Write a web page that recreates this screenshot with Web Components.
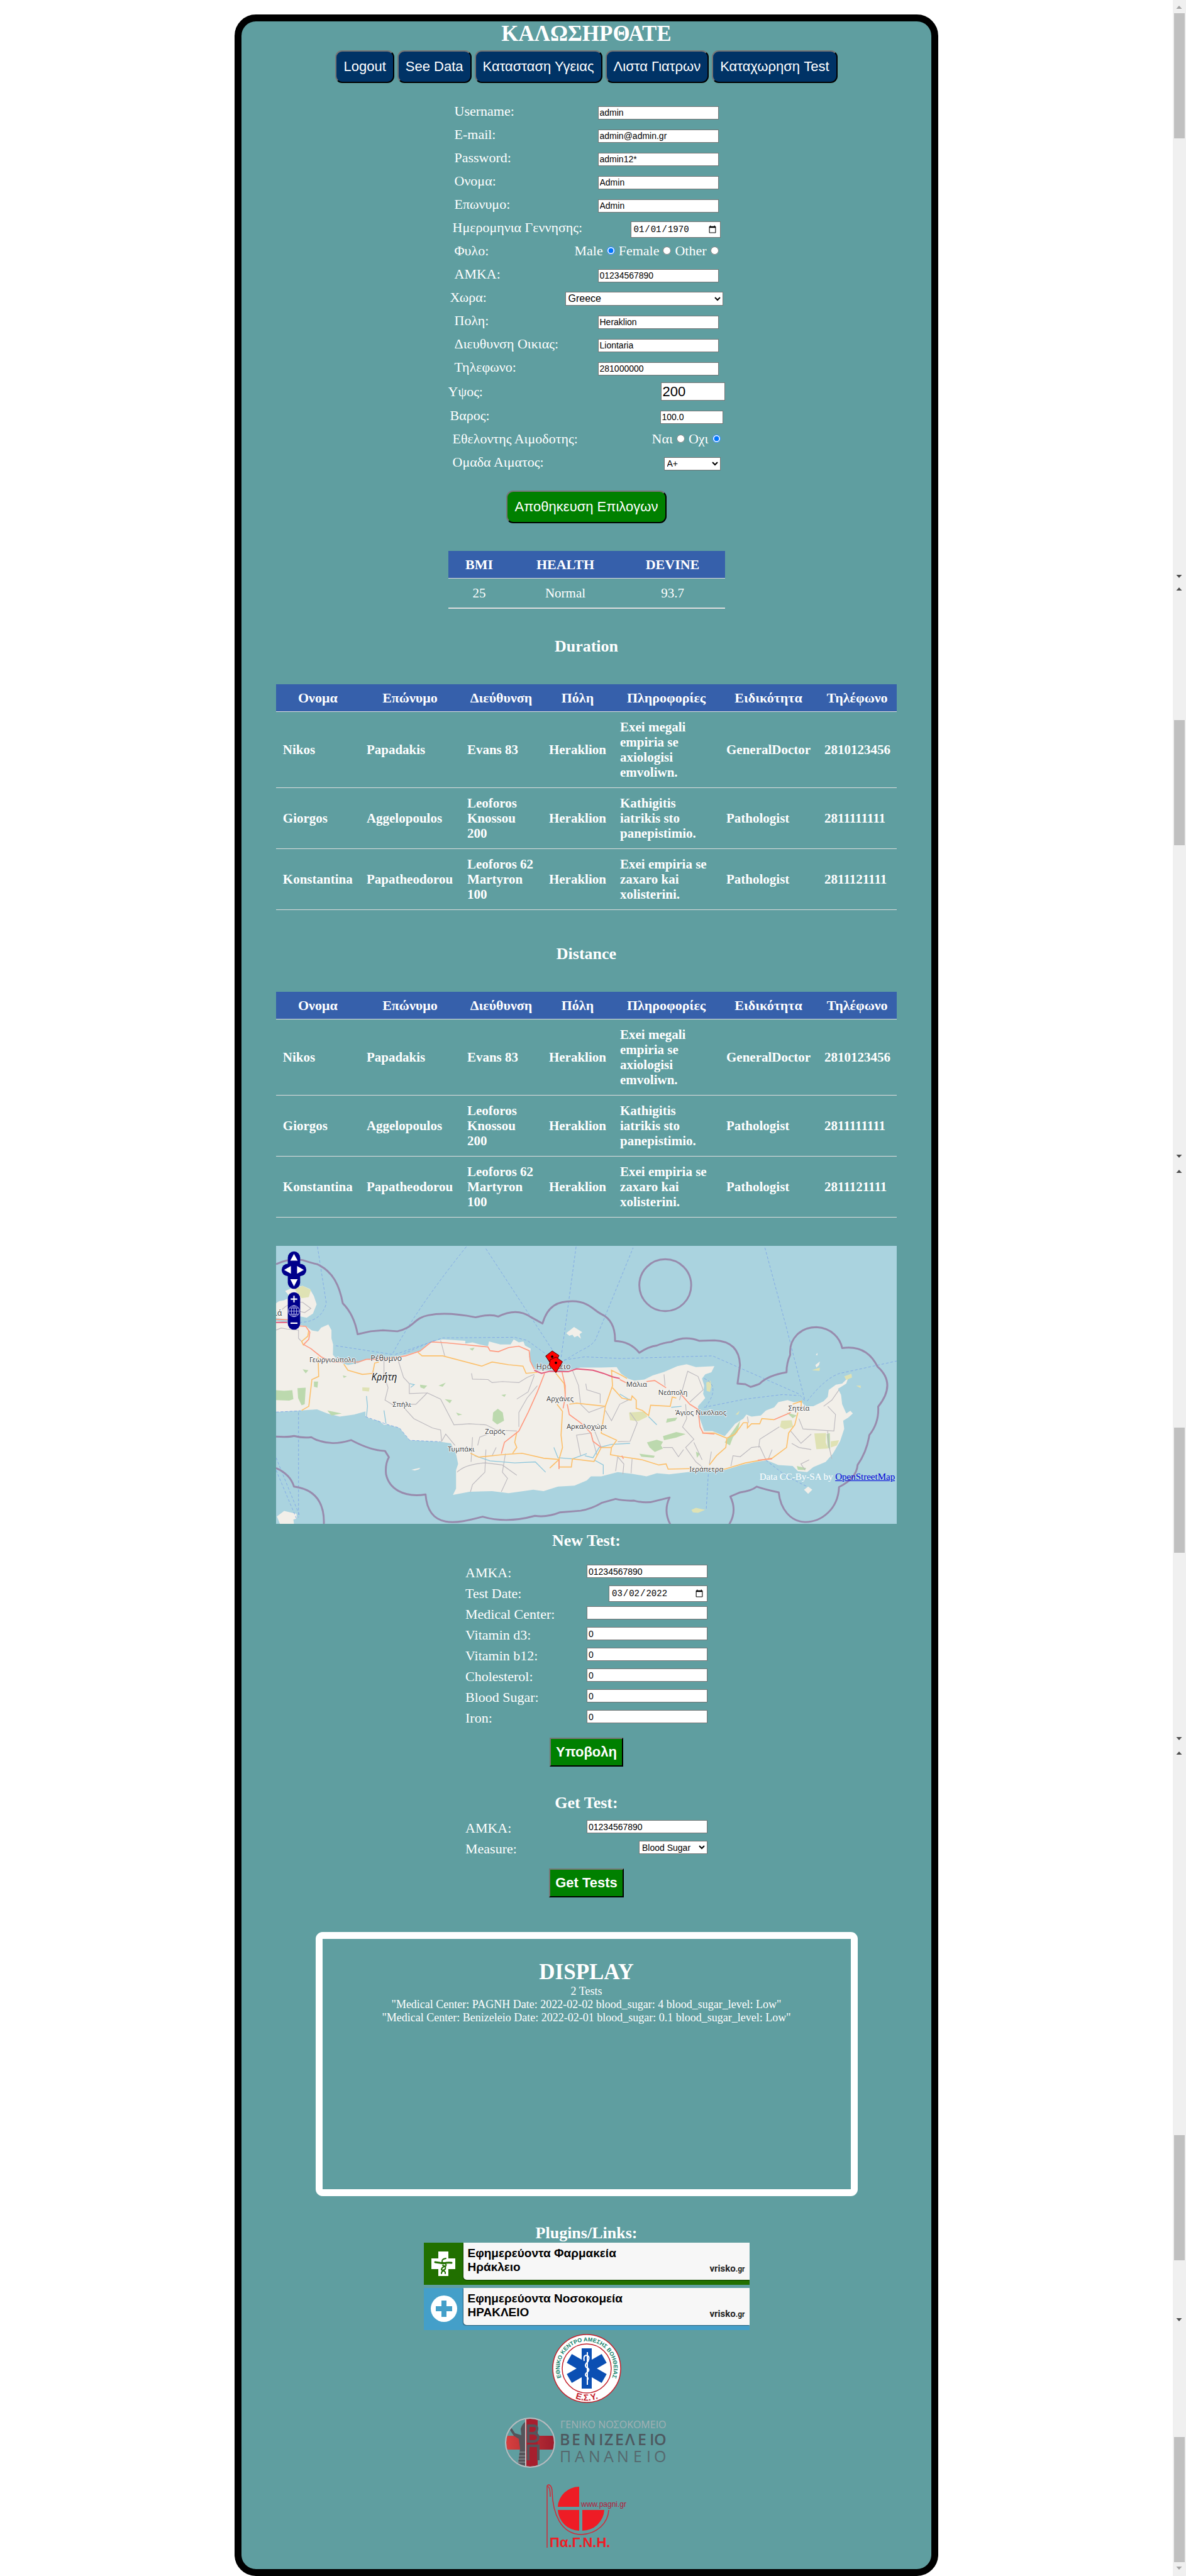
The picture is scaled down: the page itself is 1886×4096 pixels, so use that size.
<!DOCTYPE html>
<html lang="el">
<head>
<meta charset="utf-8">
<title>ΚΑΛΩΣΗΡΘΑΤΕ</title>
<style>
  body { margin: 0; background: #fff; color: #fff; font: 18px/21px "Liberation Serif", serif; }
</style>
</head>
<body>
<app-shell>
  <section-title level="1">ΚΑΛΩΣΗΡΘΑΤΕ</section-title>
  <nav-bar></nav-bar>

  <field-group kind="profile">
    <form-field label="Username:" type="text" value="admin" inset="wide"></form-field>
    <form-field label="E-mail:" type="text" value="admin@admin.gr" inset="wide"></form-field>
    <form-field label="Password:" type="text" value="admin12*" inset="wide"></form-field>
    <form-field label="Ονομα:" type="text" value="Admin" inset="wide"></form-field>
    <form-field label="Επωνυμο:" type="text" value="Admin" inset="wide"></form-field>
    <form-field label="Ημερομηνια Γεννησης:" type="date" value="1970-01-01" inset="mid" size="143"></form-field>
    <choice-field label="Φυλο:" options="Male|Female|Other" chosen="0" inset="wide"></choice-field>
    <form-field label="ΑΜΚΑ:" type="text" value="01234567890" inset="wide"></form-field>
    <form-field label="Χωρα:" type="select" value="Greece" inset="thin" size="251" text="large"></form-field>
    <form-field label="Πολη:" type="text" value="Heraklion" inset="wide"></form-field>
    <form-field label="Διευθυνση Οικιας:" type="text" value="Liontaria" inset="wide"></form-field>
    <form-field label="Τηλεφωνο:" type="text" value="281000000" inset="wide"></form-field>
    <form-field label="Υψος:" type="number" value="200" size="102" text="huge"></form-field>
    <form-field label="Βαρος:" type="number" value="100.0" inset="thin" size="100"></form-field>
    <choice-field label="Εθελοντης Αιμοδοτης:" options="Ναι|Οχι" chosen="1" inset="mid"></choice-field>
    <form-field label="Ομαδα Αιματος:" type="select" value="A+" inset="mid" size="90"></form-field>
  </field-group>
  <action-button kind="save">Αποθηκευση Επιλογων</action-button>

  <health-table></health-table>

  <section-title level="2" space="table">Duration</section-title>
  <doctor-table></doctor-table>
  <section-title level="2" space="far">Distance</section-title>
  <doctor-table></doctor-table>

  <crete-map></crete-map>

  <section-title level="2" space="form">New Test:</section-title>
  <field-group kind="test">
    <form-field label="AMKA:" type="text" value="01234567890"></form-field>
    <form-field label="Test Date:" type="date" value="2022-03-02" size="157"></form-field>
    <form-field label="Medical Center:" type="text" value=""></form-field>
    <form-field label="Vitamin d3:" type="number" value="0"></form-field>
    <form-field label="Vitamin b12:" type="number" value="0"></form-field>
    <form-field label="Cholesterol:" type="number" value="0"></form-field>
    <form-field label="Blood Sugar:" type="number" value="0"></form-field>
    <form-field label="Iron:" type="number" value="0"></form-field>
  </field-group>
  <action-button kind="submit">Υποβολη</action-button>

  <section-title level="2" space="get">Get Test:</section-title>
  <field-group kind="test">
    <form-field label="AMKA:" type="text" value="01234567890"></form-field>
    <form-field label="Measure:" type="select" value="Blood Sugar" size="109"></form-field>
  </field-group>
  <action-button kind="submit">Get Tests</action-button>

  <result-display>
    <div>2 Tests</div>
    <div>"Medical Center: PAGNH Date: 2022-02-02 blood_sugar: 4 blood_sugar_level: Low"</div>
    <div>"Medical Center: Benizeleio Date: 2022-02-01 blood_sugar: 0.1 blood_sugar_level: Low"</div>
  </result-display>

  <section-title level="2" space="links">Plugins/Links:</section-title>
  <plugin-links></plugin-links>
</app-shell>

<script>
const SERIF = '"Liberation Serif", serif';
const SANS = '"Liberation Sans", sans-serif';

function define(name, render) {
  customElements.define(name, class extends HTMLElement {
    connectedCallback() {
      if (this.shadowRoot) return;
      this.attachShadow({ mode: 'open' }).innerHTML = render(this);
    }
  });
}
const attr = (el, name, fallback = '') => el.getAttribute(name) ?? fallback;

define('app-shell', () => `
  <style>
    :host { display: flex; align-items: stretch; min-height: 100vh; }
    main { flex: 1; display: flex; justify-content: center; padding-top: 23px; }
    .card { width: 60%; box-sizing: border-box; border: 11px solid #000; border-radius: 34px;
      background: #5f9ea0; display: flex; flex-direction: column; align-items: center; padding-bottom: 24px; }
  </style>
  <main><div class="card"><slot></slot></div></main>
  <page-scrollbar></page-scrollbar>`);

define('page-scrollbar', () => {
  const thumbs = [21, 1145, 2270, 3395, 3875].map(y => `<rect x="2" y="${y}" width="17" height="199"/>`).join('');
  const up = y => `<path d="M5.500 ${y + 5}h9l-4.500-5z"/>`;
  const down = y => `<path d="M5.500 ${y}h9l-4.500 5z"/>`;
  return `
  <style>
    :host { display: block; position: relative; flex: none; width: 21px; background: #f0f0f0; }
    svg { position: absolute; inset: 0; width: 100%; height: 100%; }
  </style>
  <svg viewBox="0 0 21 4096" preserveAspectRatio="none" aria-hidden="true">
    <g fill="#c0c0c0">${thumbs}</g>
    <g fill="#a3a3a3">${up(9)}${down(4081)}</g>
    <g fill="#505050">${down(914)}${up(934)}${down(1836)}${up(1860)}${down(2762)}${up(2785)}${down(3686)}</g>
  </svg>`;
});

define('section-title', el => {
  const level = attr(el, 'level');
  return `
  <style>
    :host { display: block; text-align: center; }
    :host([space="table"]) { margin: 45px 0; }
    :host([space="far"]) { margin: 55px 0 45px; }
    :host([space="form"]) { margin: 12px 0 23px; }
    :host([space="get"]) { margin: 43px 0 12px; }
    :host([space="links"]) { margin: 44px 0 0; }
    h1, h2 { margin: 0; font-weight: bold; }
    h1 { font-size: 35px; line-height: 40px; }
    h2 { font-size: 26px; line-height: 30px; }
  </style>
  <h${level}><slot></slot></h${level}>`;
});

define('nav-bar', () => `
  <style>
    :host { display: block; margin-top: 6px; }
    nav { display: flex; gap: 5px; }
    button { height: 52px; padding: 0 11px 1px; border: 2px outset #767676; border-color: #767676 #212121 #212121 #767676;
      border-radius: 11px; background: #003366; color: #fff; font: 22px ${SANS}; white-space: nowrap; }
  </style>
  <nav>
    <button type="button">Logout</button><button type="button">See Data</button>
    <button type="button">Κατασταση Υγειας</button><button type="button">Λιστα Γιατρων</button>
    <button type="button">Καταχωρηση Test</button>
  </nav>`);

define('field-group', () => `
  <style>
    :host { display: flex; flex-direction: column; }
    :host([kind="profile"]) { width: 440px; margin: 32px 0 21px; gap: 12px; }
    :host([kind="test"]) { width: 385px; gap: 8px; margin-bottom: 19px; --row-align: flex-start; }
  </style>
  <slot></slot>`);

const FIELD_STYLE = `
  :host { display: flex; justify-content: space-between; align-items: var(--row-align, baseline);
    height: 25px; font-size: 22px; line-height: 25px; }
  :host([inset="wide"]) { padding: 0 10px; }
  :host([inset="mid"]) { padding: 0 7px; }
  :host([inset="thin"]) { padding: 0 3px; }
  label { white-space: nowrap; }`;

define('form-field', el => {
  const type = attr(el, 'type');
  const value = attr(el, 'value');
  const control = type === 'select'
    ? `<select id="field"><option>${value}</option></select>`
    : `<input id="field" type="${type}" value="${value}"${type === 'number' ? ' step="any"' : ''}>`;
  return `
  <style>
    ${FIELD_STYLE}
    :host([text="huge"]) { height: 28px; }
    input, select { width: ${attr(el, 'size', '192')}px; height: 21px; box-sizing: border-box; margin: 0; padding: 0 2px;
      border: 1px solid #767676; border-radius: 0; background: #fff; color: #000; font: 14px ${SANS}; }
    input[type="date"] { height: 26px; padding: 0 3px; font: 14px "Liberation Mono", monospace; }
    select { padding: 0; }
    :host([text="large"]) select { height: 22px; font-size: 16px; }
    :host([text="huge"]) input { height: 29px; font-size: 22px; }
  </style>
  <label for="field">${attr(el, 'label')}</label>${control}`;
});

define('choice-field', el => {
  const chosen = Number(attr(el, 'chosen'));
  const radios = attr(el, 'options').split('|').map((text, i) =>
    `<label>${text}<input type="radio" name="choice"${i === chosen ? ' checked' : ''}></label>`).join('');
  return `
  <style>
    ${FIELD_STYLE}
    .options { display: flex; gap: 6px; }
    .options label { display: flex; align-items: center; gap: 6px; }
    input { width: 13px; height: 13px; margin: 0; }
  </style>
  <span id="name">${attr(el, 'label')}</span>
  <div class="options" role="radiogroup" aria-labelledby="name">${radios}</div>`;
});

define('action-button', () => `
  <style>
    :host { display: block; }
    button { border: 2px outset #767676; border-color: #767676 #212121 #212121 #767676; background: #008000; color: #fff;
      font: 22px ${SANS}; white-space: nowrap; }
    :host([kind="save"]) { margin: 12px 0 44px; }
    :host([kind="save"]) button { height: 52px; padding: 0 12px; border-radius: 11px; }
    :host([kind="submit"]) button { height: 46px; padding: 0 8px; font-weight: bold; }
  </style>
  <button type="button"><slot></slot></button>`);

const TABLE_STYLE = `
  :host { display: block; }
  table { width: 100%; border-collapse: collapse; table-layout: fixed; }
  th, td { border-bottom: 1px solid #dddddd; color: #fff; }
  thead th { background: #3660ab; font-size: 22px; line-height: 25px; padding: 9px 0; }`;

define('health-table', () => `
  <style>
    ${TABLE_STYLE}
    :host { width: 440px; }
    td { text-align: center; font-size: 21px; line-height: 24px; padding: 11px 0; }
    tbody td { border-bottom-width: 2px; }
  </style>
  <table>
    <colgroup><col width="99"><col width="175"><col width="166"></colgroup>
    <thead><tr><th>BMI</th><th>HEALTH</th><th>DEVINE</th></tr></thead>
    <tbody><tr><td>25</td><td>Normal</td><td>93.7</td></tr></tbody>
  </table>`);

const DOCTORS = [
  ['Nikos', 'Papadakis', 'Evans 83', 'Heraklion', 'Exei megali empiria se axiologisi emvoliwn.', 'GeneralDoctor', '2810123456'],
  ['Giorgos', 'Aggelopoulos', 'Leoforos Knossou 200', 'Heraklion', 'Kathigitis iatrikis sto panepistimio.', 'Pathologist', '2811111111'],
  ['Konstantina', 'Papatheodorou', 'Leoforos 62 Martyron 100', 'Heraklion', 'Exei empiria se zaxaro kai xolisterini.', 'Pathologist', '2811121111'],
];
define('doctor-table', () => `
  <style>
    ${TABLE_STYLE}
    :host { width: 90%; }
    tbody td { font-weight: bold; font-size: 21px; line-height: 24px; padding: 12px 8px 12px 11px; vertical-align: middle; }
  </style>
  <table>
    <colgroup>${[133, 160, 130, 113, 169, 156, 126].map(w => `<col width="${w}">`).join('')}</colgroup>
    <thead><tr>${['Ονομα', 'Επώνυμο', 'Διεύθυνση', 'Πόλη', 'Πληροφορίες', 'Ειδικότητα', 'Τηλέφωνο'].map(t => `<th>${t}</th>`).join('')}</tr></thead>
    <tbody>${DOCTORS.map(r => `<tr>${r.map(c => `<td>${c}</td>`).join('')}</tr>`).join('')}</tbody>
  </table>`);

define('crete-map', () => `
  <style>
    :host { display: block; position: relative; width: 90%; margin-top: 45px; }
    svg { display: block; width: 100%; height: auto; }
    .credit { position: absolute; right: 3px; bottom: 66px; font-size: 15px; line-height: 18px; }
    .credit a { color: #0000d8; }
    .names text { font-family: "Noto Sans", sans-serif; font-size: 34px; fill: #444; stroke: #fff; stroke-width: 5px;
      paint-order: stroke; stroke-linejoin: round; text-anchor: middle; }
    .names .town { font-size: 38px; }
    .names .region { font-size: 47px; font-style: italic; fill: #222; }
  </style>
  <svg viewBox="21 21 3015 1350" role="img" aria-label="Κρήτη">
    <rect x="21" y="21" width="3015" height="1350" fill="#aad3df"/>
    <g fill="#f2efe9">
      <path d="M21 372V300L35 290 60 285 90 270 65 240 100 225 150 215 185 230 205 265 218 305 200 350 170 370 120 360 80 378z"/>
      <path d="M21 385L75 395 135 405 165 410 195 432 225 437 240 418 275 403 290 430 290 470 298 500 297 550 330 585 370 600 420 590 460 570 540 575 600 558 650 550 720 530 770 487 830 475 880 478 940 482 940 495 975 490 1010 500 1050 508 1055 485 1110 500 1160 500 1175 475 1200 490 1222 485 1230 505 1258 520 1250 560 1265 600 1285 625 1330 625 1390 630 1440 625 1500 612 1600 612 1675 610 1695 640 1730 665 1760 675 1810 670 1850 650 1905 633 1970 605 2015 596 2060 610 2150 605 2135 635 2105 645 2090 665 2100 700 2095 740 2105 760 2070 800 2075 850 2090 890 2100 920 2140 920 2200 945 2230 910 2250 885 2290 860 2305 840 2330 850 2375 845 2400 820 2440 805 2460 780 2505 770 2535 780 2570 775 2590 800 2630 800 2680 775 2700 755 2705 720 2740 695 2770 690 2800 660 2790 690 2750 715 2765 745 2770 790 2790 835 2810 822 2822 835 2800 855 2775 870 2780 910 2760 970 2725 1030 2690 1070 2630 1095 2600 1120 2555 1115 2530 1090 2460 1085 2405 1062 2350 1070 2280 1085 2200 1110 2120 1105 2060 1115 1930 1130 1870 1125 1820 1140 1750 1128 1680 1120 1600 1140 1550 1140 1530 1160 1470 1185 1390 1190 1320 1212 1270 1205 1150 1222 1070 1212 960 1215 880 1230 895 1200 895 1110 905 1080 895 1030 870 980 820 972 670 965 620 905 560 888 545 890 520 870 490 865 455 850 455 825 400 840 330 850 270 835 220 815 140 820 21 828z"/>
      <path d="M1430 445L1468 415 1508 440 1495 450 1502 472 1485 458 1470 465 1460 452 1445 458z"/>
      <path d="M25 1335L60 1308 120 1322 122 1345 105 1350 108 1371 40 1371z"/>
      <path d="M678 1108L722 1098 715 1106 695 1112zM2640 600L2662 582 2658 600 2645 612zM2642 550L2650 540 2650 553zM2585 1205L2605 1190 2625 1205 2605 1225z"/>
    </g>
    <g fill="#dfe2b4">
      <path d="M110 230L150 215 190 235 180 270 145 275z"/>
      <path d="M2623 625L2662 612 2660 628zM2780 655L2815 642 2818 660 2790 672zM2838 700L2860 700 2860 712zM2038 1303L2060 1293 2105 1303 2070 1317 2045 1315zM2110 685L2130 675 2135 700 2128 730 2112 725zM2252 840L2272 822 2265 840zM2475 870L2525 868 2532 900 2490 912 2468 900zM2635 932L2692 930 2690 975 2702 1005 2645 1008 2640 975zM2715 970L2755 965 2745 990 2715 1000z"/>
      <path d="M440 708L475 710 472 728 440 725zM1735 830L1810 825 1825 850 1780 872 1740 868z"/>
    </g>
    <g fill="#bcd9ae">
      <path d="M21 722L60 725 100 722 105 765 85 772 21 770zM125 712L165 710 160 790 145 795 128 760zM1075 830L1098 812 1122 830 1128 870 1095 888 1072 870zM1822 975L1870 962 1900 972 1890 990 1900 1005 1860 1022 1835 1000zM1900 945L1965 925 2010 935 1965 952 1905 965zM2200 975L2240 920 2275 870 2262 925 2240 950 2225 990zM1785 1030L1860 1040 1855 1050 1795 1045zM2695 935L2710 930 2712 1010 2700 1000zM720 695L755 700 740 715 722 708zM810 700L845 685 830 705zM345 650L365 655 350 662zM150 620L178 625 165 640zM205 680L225 680 222 710 205 705zM960 520L985 515 975 530zM1115 745L1138 742 1130 755zM840 765L875 770 865 785zM895 830L925 840 905 845zM270 820L340 835 290 845zM2060 1020L2080 1030 2065 1050zM2550 1090L2595 1100 2590 1110 2555 1108zM2500 830L2550 845 2530 858zM1920 860L1970 855 1960 870 1915 880z"/>
    </g>
    <g fill="none" stroke="#bdbabf" stroke-width="3.500">
      <path d="M21 430L45 420 75 425 130 430 130 470 150 490M50 330Q90 290 150 295L190 325 160 345 100 330M545 575V650L565 710 550 770 600 800 650 790 700 790 755 735 820 765 885 890 960 885 1040 890 1090 915 1190 920M615 580L640 660 668 690 668 738 755 735M645 810L690 860 780 905 820 915 825 970 845 935 890 990M820 480L840 555M970 640L975 668 1050 670 1070 685 1120 680 1200 685 1240 660 1275 645M1190 765L1245 730 1275 650M1200 900L1200 830 1240 760 1290 700M1460 625L1490 700 1500 790M1525 690L1530 720 1595 740 1595 785M900 1120Q940 1080 1040 1075L1120 1085 1190 1135M1135 1030L1120 1120 1145 1150 1115 1215M1040 1010L1035 1120 975 1180 965 1215M975 950L968 1070M1090 1000L1070 1040M1060 930L1010 950 1000 990M1500 790L1540 830 1620 800M1620 820L1650 870 1690 790 1740 765M1500 1040L1480 940 1550 930 1580 1040M1600 1000L1560 900M1740 830L1775 880 1740 970 1680 972M1670 1115L1680 1045 1710 1080 1705 1130M1750 1055L1745 1125M1905 645L1910 700M1980 770L2020 630 2070 655 2095 720 2030 780M2010 790L2015 860 1995 900 2050 960 2010 1000 2060 1070 2085 1090M1900 1000L1945 1000 1975 1045 2000 1010M2050 975L2090 1060M2135 1020L2125 1080M2230 1090L2240 1040 2275 1045 2330 1000 2370 995 2400 1060M2365 1000L2370 960 2465 900M2310 850L2315 880M2520 920L2570 980 2620 935M2560 860L2580 910 2730 920 2738 840 2700 800M2700 920L2705 990 2720 1055M2525 980L2560 1000 2620 1010M2430 1010L2410 1060M2680 800L2720 770 2755 720M2590 1110L2570 1080 2610 1060"/>
    </g>
    <g fill="none" stroke="#8fc7dc" stroke-width="4">
      <path d="M460 750L465 800 460 850M545 820L555 885M985 1040L1060 1065 1180 1075 1280 1070 1330 1120M1370 1000L1390 1050 1460 1055 1530 1030M1520 1040L1560 1050 1590 1000 1650 985 1740 980M1565 1060L1610 1085 1610 1130M1690 740L1740 770M1830 850L1870 890M1940 805L1990 800M670 690L692 695 675 708"/>
    </g>
    <g fill="none" stroke="#fcc06c" stroke-width="5">
      <path d="M180 430L175 460 145 485 155 505M225 560L228 655 195 670 180 800 145 820M350 595L370 625 440 645 490 640 500 590 520 585M710 538L730 555 830 555 1020 605 1070 585 1150 598 1220 605 1235 640 1290 635M965 1028L1005 1047 1120 1035 1215 1028 1320 1052 1395 1058 1350 1100M1190 925L1180 975 1190 1000 1170 1028M1380 640L1420 690 1425 740M1385 790L1412 825 1405 940 1412 1000 1395 1058 1395 1095 1455 1095 1460 1055 1565 1068 1600 1000 1650 1000 1645 1035 1700 1045 1800 1060 1880 1085 1915 1080 1925 1105 2060 1102 2200 1105 2300 1075 2430 1052 2500 1000 2510 930 2540 890 2555 830M1445 790L1480 785 1620 800 1655 700 1650 625 1700 650 1725 665M1620 800L1600 930 1675 965 1650 1000M1655 710L1700 760 1745 770 1750 750 1770 770 1770 810 1800 820 1830 845 1840 795 1935 800 1945 755 1965 760M2090 930L2150 930 2210 955 2250 935 2290 880 2310 880 2310 905 2330 885 2370 885 2380 860 2440 865M2210 955L2205 1000 2160 1040 2125 1085M2530 790L2572 775 2570 810"/>
    </g>
    <g fill="none" stroke="#ff9a80" stroke-width="5">
      <path d="M21 378L80 380M135 410L165 412 185 440 180 475 155 500 190 520 240 560 300 585 420 585 460 572 540 572 650 555 720 532 775 487 850 492 950 502 1050 512 1060 530 1100 535 1150 515 1200 508 1250 530 1255 580 1275 620M1325 640L1290 730 1245 830 1200 920 1130 975 1115 1030M1410 635L1425 700 1425 760 1415 810M1435 790L1445 840 1500 880 1550 930 1560 970 1600 1000M1395 1060L1395 1105M1690 670L1720 685M1820 680L1860 675 1915 710M1990 745L2030 790 2070 815 2080 900 2095 930 2150 935M2440 865L2520 830M2360 1062L2430 1055M1700 1040L1708 1055"/>
    </g>
    <path d="M21 393H75M1275 625L1310 640 1350 630 1440 632 1480 618 1560 625 1610 640 1655 657 1690 665" fill="none" stroke="#e3597c" stroke-width="6"/>
    <g fill="none" stroke="#82a9e4" stroke-width="3" stroke-dasharray="13 9">
      <path d="M222 25L265 300Q240 390 140 392M945 25Q700 330 585 548M1040 35L1395 575M1478 25L1405 565M585 548L305 505M600 548L830 468 1180 465 1240 480 1330 545M640 545L790 480M1400 590L1500 530Q1565 500 1575 470L1755 30M1420 575L1520 560 1700 568 2140 555 2560 740 2590 775M2395 30L2500 420 2590 775M2600 775Q2690 660 2760 640L3036 580M2100 805L2300 765 2480 743 2560 748M130 830V1340M21 1050L135 1330M21 1110L120 1345M2120 1130L2110 1300M2400 1062L2500 1140 2600 1190M2100 665Q2180 700 2110 800"/>
      <path d="M21 828L140 822M455 850L560 888 620 905 670 965 820 972"/>
    </g>
    <g fill="none" stroke="#988bad" stroke-width="9" stroke-linejoin="round">
      <path d="M21 110Q85 80 150 90Q195 105 220 110C300 145 330 220 345 300Q400 355 417 450L480 436 540 431 610 436C690 420 690 370 760 358Q850 340 990 368Q1060 350 1100 364Q1190 320 1255 365L1315 398C1340 310 1390 290 1460 290C1540 290 1570 340 1600 352Q1670 385 1667 483Q1740 485 1785 540Q1830 510 1870 505Q1900 492 1940 487Q2010 455 2075 482L2150 480Q2270 485 2274 600L2262 690 2300 693 2325 706Q2360 695 2370 690Q2410 650 2500 635Q2500 590 2518 550C2510 470 2570 416 2645 416C2720 420 2760 470 2770 517Q2890 500 2942 608Q3035 690 2945 802Q2950 880 2902 940Q2890 1020 2845 1085Q2840 1150 2755 1192C2750 1300 2670 1362 2590 1362C2520 1360 2470 1300 2462 1218Q2400 1205 2355 1190Q2330 1210 2275 1218L2227 1238Q2262 1310 2220 1376"/>
      <path d="M1937 1376Q1900 1310 1932 1243L1870 1258Q1820 1275 1760 1258Q1710 1260 1670 1250L1605 1268Q1550 1300 1500 1307L1400 1315Q1340 1340 1278 1332Q1140 1370 1024 1336C900 1370 760 1400 747 1228C640 1245 570 1200 555 1130Q550 1080 569 1047L550 1017Q480 1015 385 964Q300 990 240 970Q215 965 192 950Q150 955 108 944 80 951 21 947"/>
      <path d="M21 1100Q90 1130 108 1190Q260 1210 253 1376"/>
      <circle cx="1911" cy="212" r="126"/>
    </g>
    <g class="names">
      <text x="50" y="360" class="town" style="text-anchor:end">ιά</text>
      <text x="296" y="586">Γεωργιούπολη</text>
      <text x="556" y="580" class="town">Ρέθυμνο</text>
      <text x="546" y="676" class="region">Κρήτη</text>
      <text x="632" y="804">Σπήλι</text>
      <text x="1085" y="935">Ζαρός</text>
      <text x="920" y="1021">Τυμπάκι</text>
      <text x="1400" y="776">Αρχάνες</text>
      <text x="1530" y="910">Αρκαλοχώρι</text>
      <text x="1368" y="621" class="town">Ηράκλειο</text>
      <text x="1772" y="706">Μάλια</text>
      <text x="1948" y="744">Νεάπολη</text>
      <text x="2084" y="843">Άγιος Νικόλαος</text>
      <text x="2560" y="820">Σητεία</text>
      <text x="2111" y="1118">Ιεράπετρα</text>
    </g>
    <g fill="#f00" stroke="#400" stroke-width="3">
      <path d="M1362 531L1395 553 1383 580 1362 605 1330 556z"/><circle cx="1362" cy="559" r="5" fill="#000"/>
      <path d="M1381 561L1412 584 1380 637 1348 600 1352 574z"/><circle cx="1380" cy="589" r="5" fill="#000"/>
    </g>
    <g fill="#00008b">
      <rect x="78" y="48" width="60" height="182" rx="30"/><rect x="48" y="108" width="120" height="60" rx="30"/>
      <rect x="78" y="246" width="60" height="182" rx="30"/>
    </g>
    <path fill="#fff" d="M108 60L126 93H90zM108 218L126 183H90zM60 138L93 119V156zM156 138L123 119V156zM92 276H105V263H111V276H124V283H111V296H105V283H92zM91 393H125V400H91z"/>
    <g fill="none" stroke="#b9b9ea" stroke-width="3">
      <circle cx="108" cy="338" r="27"/><ellipse cx="108" cy="338" rx="13" ry="27"/><path d="M108 311V365M81 338H135M87 323H129M87 353H129"/>
    </g>
  </svg>
  <div class="credit">Data CC-By-SA by <a href="#osm">OpenStreetMap</a></div>`);

define('result-display', () => `
  <style>
    :host { display: block; box-sizing: border-box; width: 862px; min-height: 420px; margin-top: 55px; padding-top: 33px;
      border: 11px solid #fff; border-radius: 11px; text-align: center; }
    h1 { margin: 0; font-size: 35px; line-height: 40px; }
  </style>
  <h1>DISPLAY</h1>
  <slot></slot>`);

define('duty-banner', el => `
  <style>
    :host { display: block; width: 518px; --tone: #217000; }
    :host([kind="hospital"]) { --tone: #449fc9; }
    a { display: flex; align-items: flex-start; height: 67px; background: var(--tone); color: #000; text-decoration: none; }
    svg { flex: none; width: 63px; height: 67px; }
    .panel { flex: 1; height: 59px; box-sizing: border-box; padding: 6px 7px 0; display: flex; justify-content: space-between; align-items: flex-start;
      background: #f7f7f7; border-bottom-left-radius: 5px; box-shadow: -1px 1px 1px #0006; }
    .place { font: bold 19px/22px ${SANS}; }
    .brand { align-self: flex-end; padding-bottom: 7px; font: bold 15px/20px Roboto, sans-serif; color: #222; }
    small { font-size: 12px; }
  </style>
  <a href="#${attr(el, 'kind')}">
    ${attr(el, 'kind') === 'pharmacy'
      ? `<svg viewBox="0 0 63 67" aria-hidden="true"><path d="M23 14H39V25H50V42H39V53H23V42H12V25H23z" fill="#fff"/>
         <g fill="none" stroke="#217000" stroke-linecap="round"><path d="M35 25Q28 26 29 31Q37 33 35 37Q28 39 28 43Q35 45 34 49M28 49Q28 45 34 42Q36 38 30 36" stroke-width="2"/><path d="M18 31Q26 32 31 33Q38 31 44 32" stroke-width="3"/></g></svg>`
      : `<svg viewBox="0 0 63 67" aria-hidden="true"><circle cx="32" cy="33" r="21" fill="#fff"/><path d="M28 20H36V29H45V37H36V46H28V37H19V29H28z" fill="#449fc9"/></svg>`}
    <span class="panel"><span class="place">${attr(el, 'label')}<br>${attr(el, 'city')}</span><span class="brand">vrisko<small>.gr</small></span></span>
  </a>`);

define('plugin-links', () => `
  <style>
    :host { display: flex; flex-direction: column; align-items: center; gap: 5px; }
    a { display: block; }
    svg { display: block; }
    .ring text { font: bold 9px ${SANS}; fill: #14826b; text-anchor: middle; }
    .ring .esy { font-size: 14px; fill: #c4202b; }
    .ven text { font-family: "Open Sans", sans-serif; }
  </style>
  <duty-banner kind="pharmacy" label="Εφημερεύοντα Φαρμακεία" city="Ηράκλειο"></duty-banner>
  <duty-banner kind="hospital" label="Εφημερεύοντα Νοσοκομεία" city="ΗΡΑΚΛΕΙΟ"></duty-banner>
  <a href="#ekab"><svg class="ring" width="110" height="112" viewBox="0 0 110 112" role="img" aria-label="ΕΚΑΒ">
    <defs><path id="top" d="M19 79.400A43 43 0 1 1 91 79.400"/><path id="low" d="M29.500 100.200A51 51 0 0 0 80.500 100.200"/></defs>
    <circle cx="55" cy="56" r="54" fill="#fff" stroke="#c4202b" stroke-width="1.500"/>
    <circle cx="55" cy="56" r="39" fill="#fff" stroke="#c4202b" stroke-width="1.500"/>
    <g fill="#0b4fb3"><rect x="47" y="24" width="16" height="64"/><rect x="47" y="24" width="16" height="64" transform="rotate(60 55 56)"/><rect x="47" y="24" width="16" height="64" transform="rotate(120 55 56)"/></g>
    <path d="M56 30V82M51 44Q49 35 55 35Q61 37 57 45Q51 50 54 54Q61 57 57 61Q51 65 54 68Q59 71 56 75" fill="none" stroke="#fff" stroke-width="2"/>
    <text><textPath href="#top" startOffset="50%">ΕΘΝΙΚΟ ΚΕΝΤΡΟ ΑΜΕΣΗΣ ΒΟΗΘΕΙΑΣ</textPath></text>
    <text class="esy"><textPath href="#low" startOffset="50%">Ε.Σ.Υ.</textPath></text>
  </svg></a>
  <a href="#venizeleio"><svg class="ven" width="316" height="118" viewBox="0 0 316 118" role="img" aria-label="Βενιζέλειο Πανάνειο">
    <defs><clipPath id="disc"><circle cx="68" cy="57" r="38"/></clipPath>
      <linearGradient id="arm"><stop offset="0" stop-color="#d8413f"/><stop offset="1" stop-color="#9c1c2c"/></linearGradient></defs>
    <g clip-path="url(#disc)">
      <rect x="28" y="46" width="80" height="22" fill="url(#arm)"/><rect x="60" y="17" width="20" height="80" fill="#a71f2e"/>
      <path d="M38 33L44 42 54 45 53 35Q55 28 60 24L62 97H48L52 66 50 51 42 46 36 37z" fill="#55545a"/>
      <path d="M50 78H61M49 83H61M48 88H61M51 72H61" stroke="#9aa0a4" stroke-width="1"/>
      <path d="M61 17V97" stroke="#e8e4e4" stroke-width="1.500"/>
    </g>
    <circle cx="68" cy="57" r="39" fill="none" stroke="#b9bcc0" stroke-width="2"/>
    <path d="M65 30H73Q80 30 79 36Q78 41 73 42Q81 43 81 49Q80 55 73 55H65zM65 42H73M65 85V62H81V85" fill="none" stroke="#55545a" stroke-width="4"/>
    <text x="116" y="34" font-size="16" fill="#a3b1b5">ΓΕΝΙΚΟ ΝΟΣΟΚΟΜΕΙΟ</text>
    <text x="115 134 153 177 186 203 219 239 258 265" y="61" font-size="25" font-weight="600" fill="#4d5960">ΒΕΝΙΖΕΛΕΙΟ</text>
    <text x="115 139 161 185 206 232 253 265" y="88" font-size="25" fill="#56686e">ΠΑΝΑΝΕΙΟ</text>
  </svg></a>
  <a href="#pagni"><svg width="130" height="104" viewBox="-1 0 130 104" role="img" aria-label="ΠαΓΝΗ">
    <g fill="#ee1c25">
      <path d="M52 36H18A34 34 0 0 1 52 4zM52 41V74A35 35 0 0 1 18 41zM57 41H92A35 35 0 0 1 57 74z"/>
      <text x="5" y="100" font-family="Liberation Sans, sans-serif" font-size="22" font-weight="bold">Πα.Γ.Ν.Η.</text>
    </g>
    <path d="M1 101V4Q1 1 4 1Q9 3 9 12C10 45 22 80 56 80C80 79 98 62 99 41M2 4Q6 4 6 20" fill="none" stroke="#d02a38" stroke-width="1.500"/>
    <text x="55" y="36" font-family="Liberation Sans, sans-serif" font-size="12" fill="#b5183a">www.pagni.gr</text>
  </svg></a>`);
</script>
</body>
</html>
